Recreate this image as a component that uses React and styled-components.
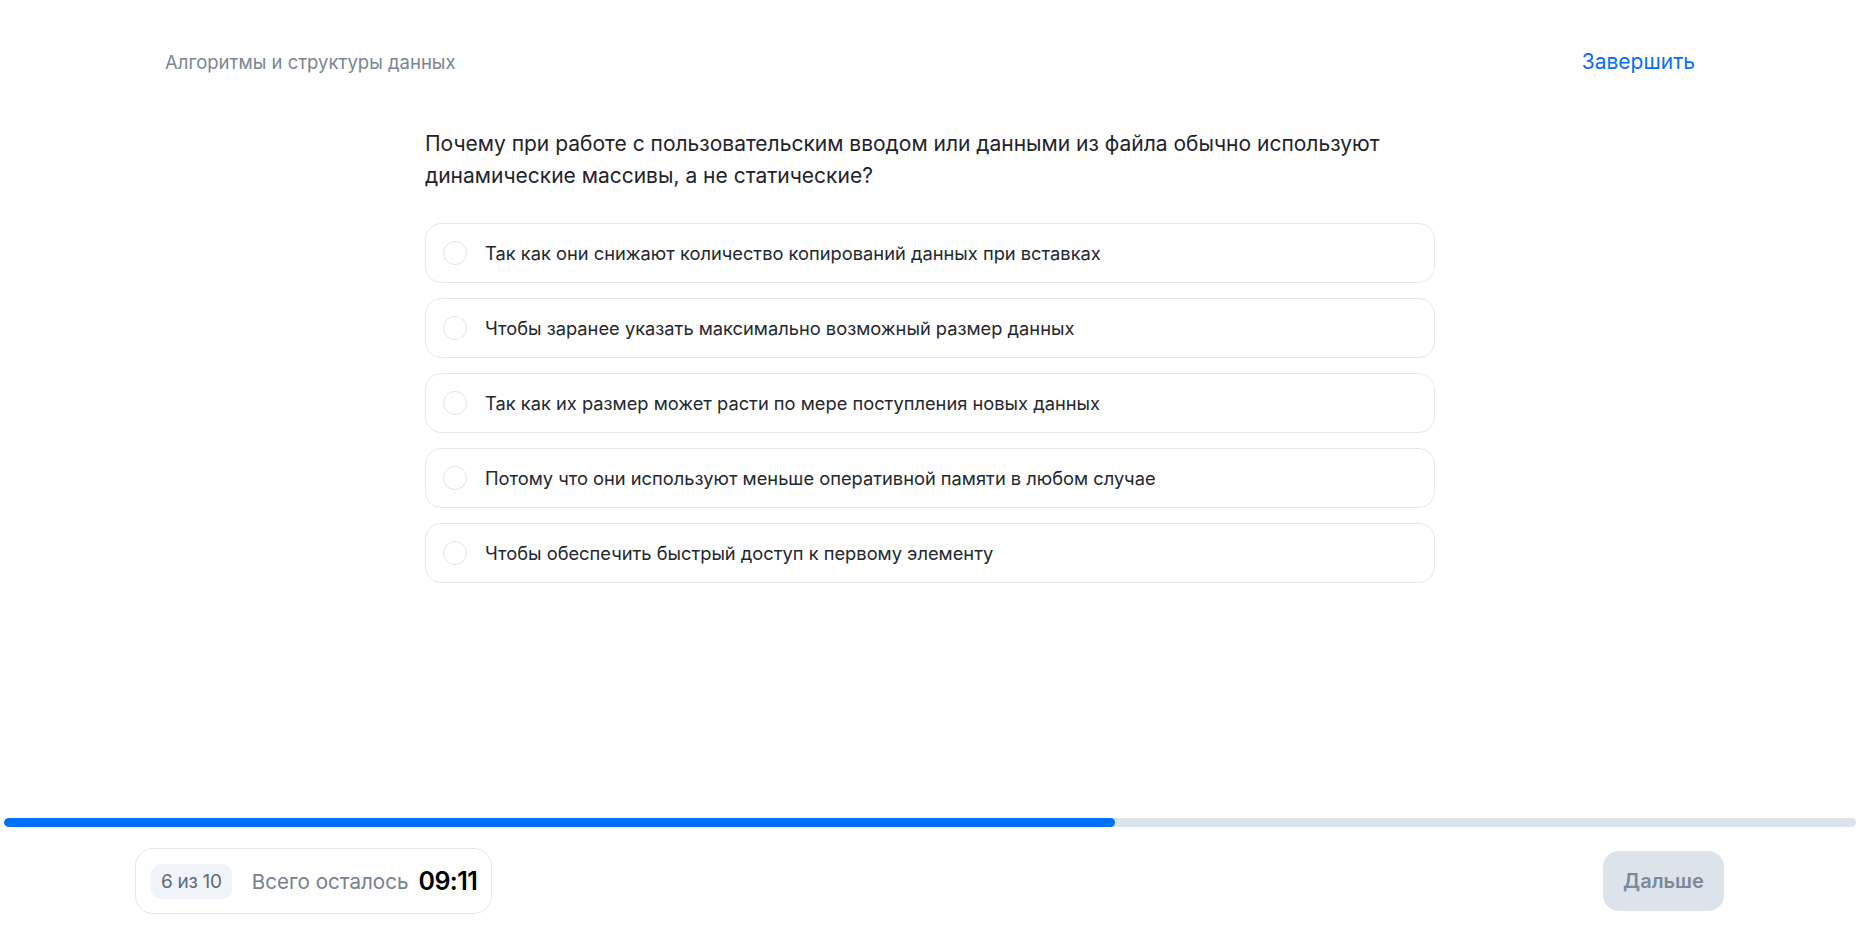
import React, { useState } from "react";
import styled, { createGlobalStyle } from "styled-components";

const GlobalStyle = createGlobalStyle`
	body {
		margin: 0;
		background: #fff;
		font-family: Inter, "Noto Sans", sans-serif;
	}
	* { box-sizing: border-box; }
`;

const answers = [
	"Так как они снижают количество копирований данных при вставках",
	"Чтобы заранее указать максимально возможный размер данных",
	"Так как их размер может расти по мере поступления новых данных",
	"Потому что они используют меньше оперативной памяти в любом случае",
	"Чтобы обеспечить быстрый доступ к первому элементу",
];

const App = () => {
	const [selected, setSelected] = useState(null);
	const current = 6;
	const total = 10;

	return (
		<Page>
			<GlobalStyle />
			<Header>
				<Topic>Алгоритмы и структуры данных</Topic>
				<Finish>Завершить</Finish>
			</Header>
			<Main>
				<Question>
					Почему при работе с пользовательским вводом или данными из файла обычно используют
					динамические массивы, а не статические?
				</Question>
				<Options>
					{answers.map((text, i) => (
						<Option key={i} onClick={() => setSelected(i)}>
							<Radio checked={selected === i} />
							<OptionText>{text}</OptionText>
						</Option>
					))}
				</Options>
			</Main>
			<Bottom>
				<Track>
					<Fill style={{ width: `${(current / total) * 100}%` }} />
				</Track>
				<Footer>
					<Status>
						<Counter>{current} из {total}</Counter>
						<Remaining>Всего осталось</Remaining>
						<Timer>09:11</Timer>
					</Status>
					<Next disabled={selected === null}>Дальше</Next>
				</Footer>
			</Bottom>
		</Page>
	);
};

export default App;

const Page = styled.div`
	min-height: 100vh;
	display: flex;
	flex-direction: column;
`;

const Header = styled.div`
	display: flex;
	justify-content: space-between;
	align-items: center;
	padding: 50px 165px 0;
`;

const Topic = styled.span`
	font-size: 18.5px;
	line-height: 24px;
	color: #7b8692;
`;

const Finish = styled.button`
	border: none;
	background: none;
	padding: 0;
	font-family: inherit;
	font-size: 21px;
	line-height: 24px;
	color: #0a6cff;
	cursor: pointer;
`;

const Main = styled.div`
	flex: 1;
	width: 1010px;
	margin: 0 auto;
	padding-top: 54px;
`;

const Question = styled.p`
	margin: 0 0 31px;
	font-size: 21px;
	line-height: 32px;
	color: #1f242c;
`;

const Options = styled.div`
	display: flex;
	flex-direction: column;
	gap: 15px;
`;

const Option = styled.div`
	display: flex;
	align-items: center;
	gap: 18px;
	height: 60px;
	padding: 0 16px 0 17px;
	border: 1px solid #e3e8ef;
	border-radius: 16px;
	cursor: pointer;
`;

const Radio = styled.span`
	flex-shrink: 0;
	width: 24px;
	height: 24px;
	border-radius: 50%;
	border: ${(p) => (p.checked ? "7px solid #0a6cff" : "1.5px solid #dfe4eb")};
`;

const OptionText = styled.span`
	font-size: 18.3px;
	color: #23272e;
`;

const Bottom = styled.div`
	padding: 0 4px;
`;

const Track = styled.div`
	height: 9px;
	border-radius: 5px;
	background: #dde3ea;
	overflow: hidden;
`;

const Fill = styled.div`
	height: 100%;
	border-radius: 5px;
	background: #0070ff;
`;

const Footer = styled.div`
	display: flex;
	justify-content: space-between;
	align-items: center;
	padding: 21px 132px 21px 131px;
`;

const Status = styled.div`
	display: flex;
	align-items: center;
	height: 66px;
	padding: 0 14px 0 15px;
	border: 1px solid #e2e7ee;
	border-radius: 18px;
`;

const Counter = styled.span`
	display: flex;
	align-items: center;
	height: 35px;
	padding: 0 10px;
	border-radius: 10px;
	background: #f0f3f7;
	font-size: 19px;
	letter-spacing: -0.3px;
	color: #5f6b78;
`;

const Remaining = styled.span`
	margin-left: 20px;
	font-size: 20.6px;
	color: #76818e;
`;

const Timer = styled.span`
	margin-left: 10px;
	font-size: 25px;
	font-weight: 600;
	letter-spacing: -0.6px;
	color: #000;
`;

const Next = styled.button`
	width: 121px;
	height: 60px;
	border: none;
	border-radius: 16px;
	background: ${(p) => (p.disabled ? "#dde3ea" : "#0a6cff")};
	color: ${(p) => (p.disabled ? "#7a8a9b" : "#fff")};
	font-family: inherit;
	font-size: 20px;
	font-weight: 600;
`;
